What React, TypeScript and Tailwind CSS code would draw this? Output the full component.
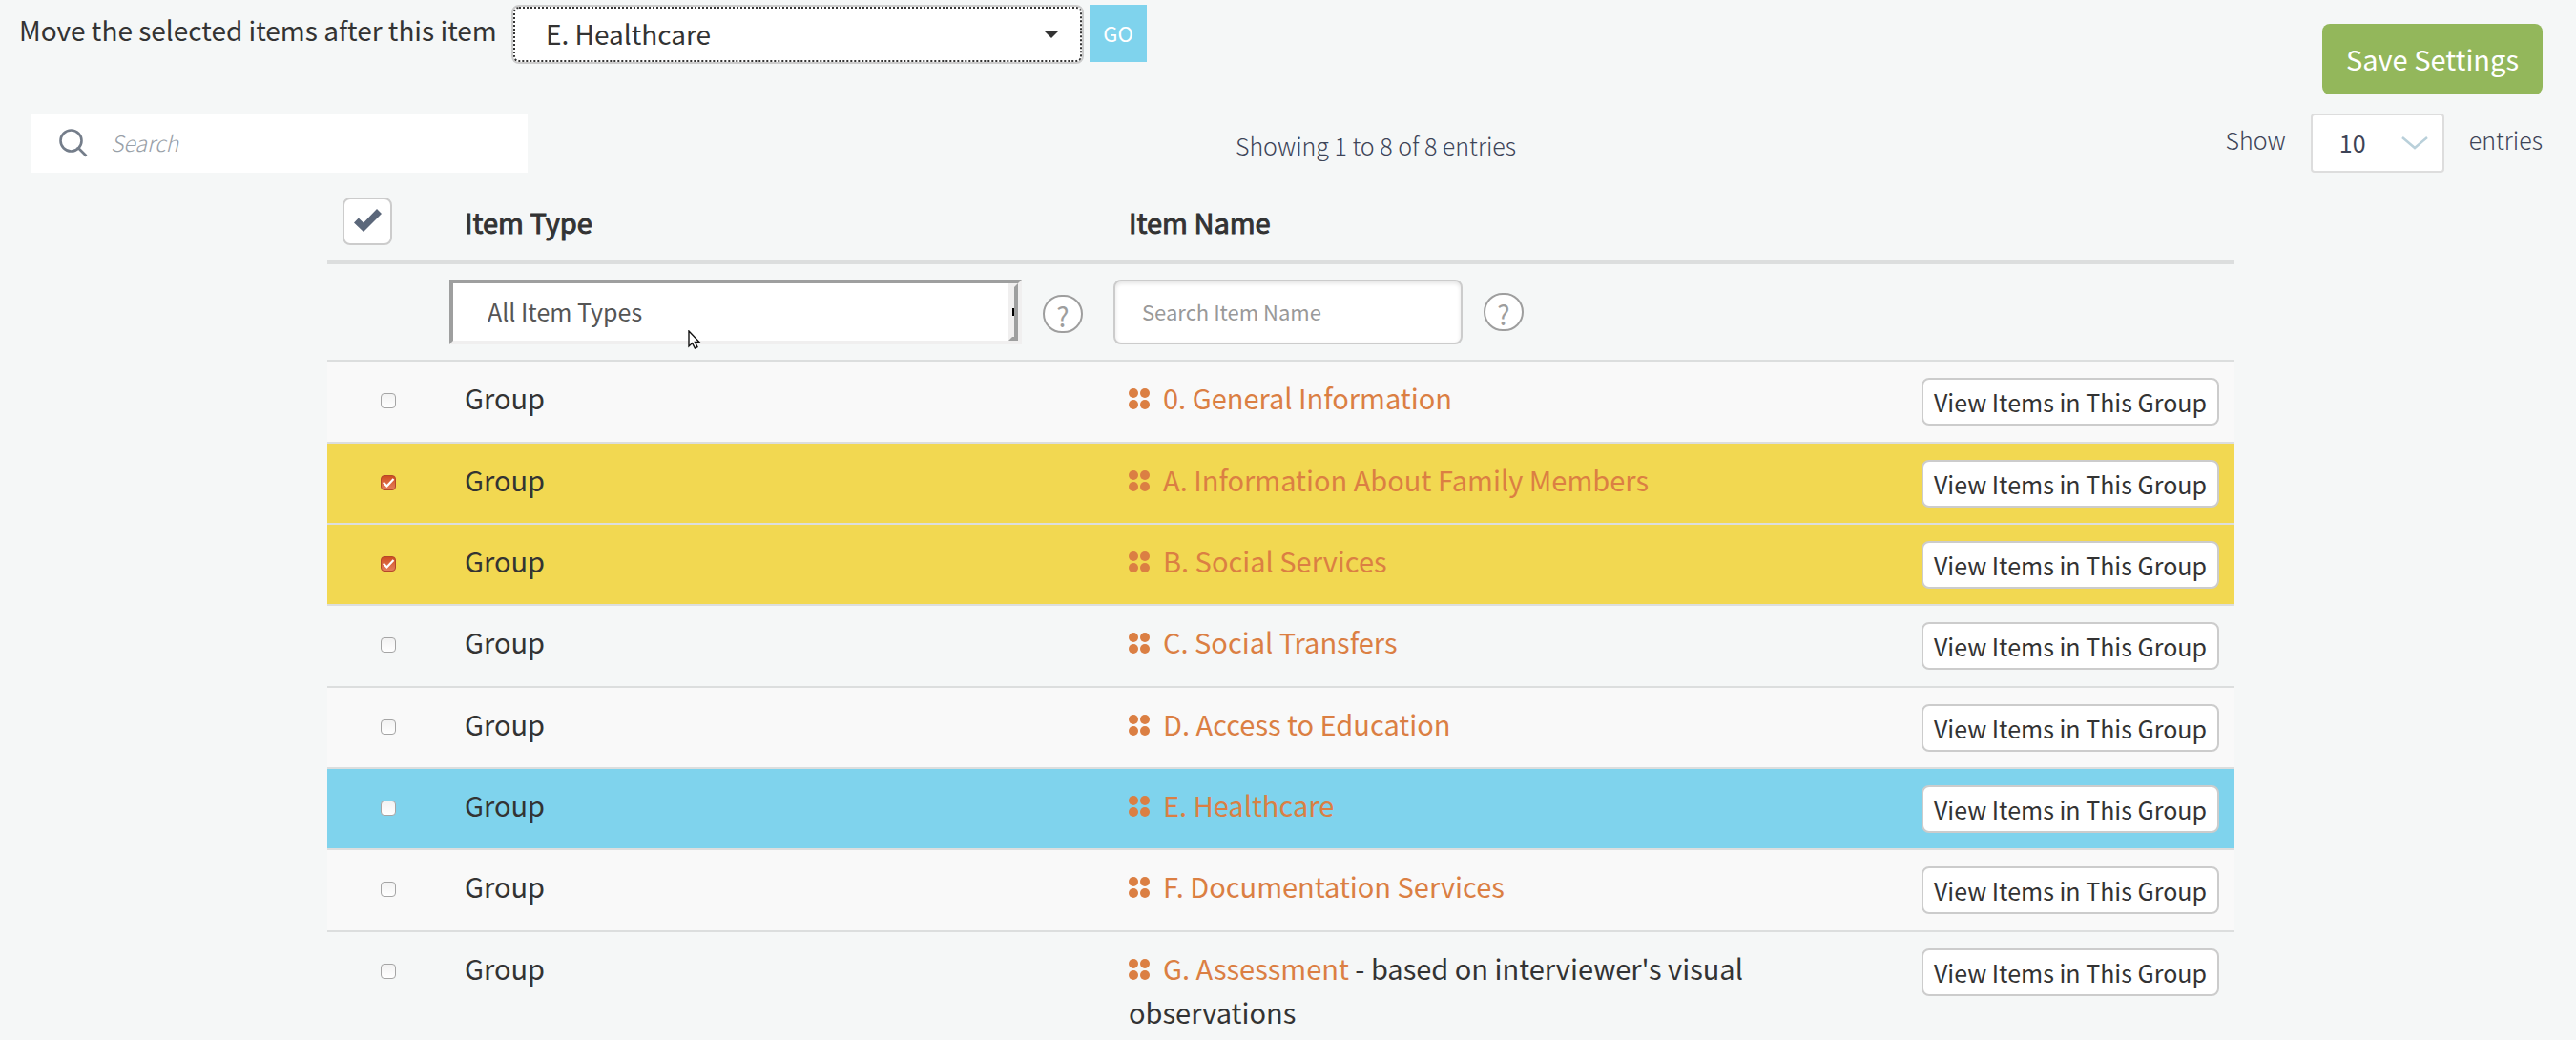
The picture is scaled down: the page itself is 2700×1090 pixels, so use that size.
import { useState } from "react";

const GROUPS = [
  { name: "0. General Information", note: "" },
  { name: "A. Information About Family Members", note: "" },
  { name: "B. Social Services", note: "" },
  { name: "C. Social Transfers", note: "" },
  { name: "D. Access to Education", note: "" },
  { name: "E. Healthcare", note: "" },
  { name: "F. Documentation Services", note: "" },
  { name: "G. Assessment", note: " - based on interviewer's visual observations" },
];

function SearchIcon() {
  return (
    <svg viewBox="0 0 30 30" className="size-[30px] shrink-0" fill="none" stroke="#747d8a" strokeWidth="2.6" aria-hidden="true">
      <circle cx="12.5" cy="12.5" r="11" />
      <path d="M18.500 20.500h3.500M20.500 20.500l8 8" />
    </svg>
  );
}

function GroupIcon() {
  return (
    <svg viewBox="0 0 22 22" className="mr-[14px] inline-block size-[22px] align-baseline" fill="#db7f43" aria-hidden="true">
      <circle cx="5" cy="5" r="5" />
      <circle cx="17" cy="5" r="5" />
      <circle cx="5" cy="17" r="5" />
      <circle cx="17" cy="17" r="5" />
    </svg>
  );
}

function HelpButton({ label }: { label: string }) {
  return (
    <button
      type="button"
      aria-label={label}
      className="flex h-10 w-[42px] shrink-0 items-center justify-center rounded-full border-2 border-[#9e9e9e] bg-white pt-1 text-[28px] leading-8 text-[#9e9e9e]"
    >
      ?
    </button>
  );
}

function Pointer() {
  return (
    <svg viewBox="0 0 14 20" className="pointer-events-none absolute top-[53px] left-[250px] h-[20px] w-[14px]" aria-hidden="true">
      <path d="M1 1v16l3.600-3.400 2.800 5.400 2.600-1.300-2.600-5.200H12z" fill="#fff" stroke="#111" strokeWidth="1.400" />
    </svg>
  );
}

export default function App() {
  const [target, setTarget] = useState("E. Healthcare");
  const [checked, setChecked] = useState<string[]>([GROUPS[1].name, GROUPS[2].name]);
  const toggle = (name: string) =>
    setChecked((c) => (c.includes(name) ? c.filter((n) => n !== name) : [...c, name]));

  return (
    <main className="min-h-screen bg-[#f5f7f7] font-['Noto_Sans_CJK_SC',sans-serif] text-[29px] leading-[46px] text-[#333]">
      <header className="flex items-start pr-[35px] pl-[20px]">
        <label htmlFor="target" className="min-w-[508px] pt-2 text-[28px]">Move the selected items after this item</label>
        <div className="relative mt-[5px] ml-2">
          <select
            id="target"
            value={target}
            onChange={(e) => setTarget(e.target.value)}
            className="h-[62px] w-[600px] appearance-none rounded-lg border-2 border-[#ccc] bg-white pb-[2px] pl-[34px] text-[28px] outline-2 -outline-offset-4 outline-dotted outline-[#333]"
          >
            {GROUPS.map((g) => <option key={g.name}>{g.name}</option>)}
          </select>
          <svg viewBox="0 0 16 8" className="pointer-events-none absolute top-[27px] right-[26px] h-2 w-4" fill="#333" aria-hidden="true">
            <path d="M0 0h16l-8 8z" />
          </svg>
        </div>
        <button type="button" className="mt-[5px] ml-[6px] h-[60px] w-[60px] bg-[#7fd3ed] pb-[2px] text-[22px] text-white">GO</button>
        <button type="button" className="mt-[25px] ml-auto h-[74px] rounded-lg bg-[#93b75b] px-[25px] pb-[2px] text-white">Save Settings</button>
      </header>

      <section className="mt-5 grid grid-cols-3 items-start pr-[35px] pl-[33px] text-[25px] font-light text-[#3d4457]">
        <label className="flex h-[62px] w-[520px] items-center gap-6 bg-white pl-[29px]">
          <SearchIcon />
          <input type="search" placeholder="Search" aria-label="Search" className="min-w-0 grow pb-[2px] text-[23px] italic outline-none placeholder:text-[#999fa8]" />
        </label>
        <p className="pt-[10px] pl-[186px] text-center">Showing 1 to 8 of 8 entries</p>
        <label className="flex items-start justify-end">
          <span className="pt-1">Show</span>
          <span className="relative mx-[26px]">
            <select className="h-[62px] w-[140px] appearance-none rounded border-2 border-[#ddd] bg-white pb-[2px] pl-7 text-[25px] font-normal">
              <option>10</option>
              <option>25</option>
            </select>
            <svg viewBox="0 0 28 14" className="pointer-events-none absolute top-[24px] right-[17px] h-[14px] w-[28px]" fill="none" stroke="#b9d0da" strokeWidth="2.500" aria-hidden="true">
              <path d="M1 1l13 11L27 1" />
            </svg>
          </span>
          <span className="pt-1">entries</span>
        </label>
      </section>

      <div className="pt-3 pr-[358px] pl-[343px]">
        <table className="w-full table-fixed border-collapse text-left">
          <colgroup>
            <col className="w-[128px]" />
            <col className="w-[696px]" />
            <col />
            <col className="w-[360px]" />
          </colgroup>
          <thead>
            <tr className="h-[82px] border-b-4 border-[#dcdede] align-top">
              <th className="pt-[14px] pl-4">
                <button type="button" aria-label="Select all" className="flex h-[50px] w-[52px] items-center justify-center rounded-lg border-2 border-[#ccc] bg-white">
                  <svg viewBox="0 0 29 24" className="mb-[2px] h-[24px] w-[29px]" fill="#5b677a" aria-hidden="true">
                    <path d="M0 14.500l4.800-5 5.200 5L24 0l5 5L10 24z" />
                  </svg>
                </button>
              </th>
              <th className="pt-4 pl-4 font-normal [-webkit-text-stroke:1px_#333]">Item Type</th>
              <th className="pt-4 pl-4 font-normal [-webkit-text-stroke:1px_#333]">Item Name</th>
              <th aria-label="Actions" />
            </tr>
            <tr className="h-[103px] border-b-2 border-[#dcdede]">
              <td />
              <td>
                <div className="relative flex items-center gap-[22px]">
                  <div className="relative h-[68px] w-[600px]">
                    <select aria-label="Item type" className="size-full appearance-none border-4 border-t-[#9e9f9f] border-r-[#f0efef] border-b-[#f0efef] border-l-[#9e9f9f] bg-white pb-[2px] pl-9 text-[25px] text-[#555]">
                      <option>All Item Types</option>
                      <option>Group</option>
                    </select>
                    <span className="pointer-events-none absolute top-1 right-1 bottom-1 w-[10px] border-4 border-t-[#f0efef] border-r-[#9e9f9f] border-b-[#9e9f9f] border-l-[#f0efef] bg-[#f0efef]" />
                    <span className="pointer-events-none absolute top-[30px] right-2 h-2 w-[2px] bg-black" />
                  </div>
                  <div className="pt-1">
                    <HelpButton label="Item type help" />
                  </div>
                  <Pointer />
                </div>
              </td>
              <td>
                <div className="flex items-center gap-[22px]">
                  <input type="text" placeholder="Search Item Name" aria-label="Search item name" className="h-[68px] w-[366px] rounded-lg border-2 border-[#ccc] bg-white px-7 pb-[2px] text-[22px] shadow-[inset_0_2px_4px_#e4e4e4] placeholder:text-[#999]" />
                  <HelpButton label="Item name help" />
                </div>
              </td>
              <td />
            </tr>
          </thead>
          <tbody>
            {GROUPS.map((g) => {
              const on = checked.includes(g.name);
              const bg = on ? "bg-[#f2d851]" : g.name === target ? "bg-[#7fd3ed]" : "odd:bg-[#f9f9f9]";
              return (
                <tr key={g.name} className={`h-[85px] border-b-2 border-[#dcdede] align-top last:border-b-0 nth-[3n+1]:h-[86px] ${bg}`}>
                  <td className="pt-[33px] pl-[56px]">
                    <div className="relative size-4">
                      <input
                        type="checkbox"
                        checked={on}
                        onChange={() => toggle(g.name)}
                        aria-label={g.name}
                        className="block size-4 appearance-none rounded border border-[#a5a5a5] bg-linear-to-b from-[#f2f2f2] to-white checked:border-[#b5482a] checked:from-[#cf4e1f] checked:to-[#e5805a]"
                      />
                      {on && (
                        <svg viewBox="0 0 16 16" className="pointer-events-none absolute inset-0 size-4" fill="none" stroke="#fff" strokeWidth="2.200" aria-hidden="true">
                          <path d="M2.800 7.500l3.700 4L13.500 4" />
                        </svg>
                      )}
                    </div>
                  </td>
                  <td className="pt-[14px] pl-4">Group</td>
                  <td className="pt-[14px] pl-4">
                    <GroupIcon />
                    <a href="#group" className="text-[#db7f43]">{g.name}</a>
                    {g.note}
                  </td>
                  <td className="pt-[17px] pr-4 text-right">
                    <button type="button" className="ml-auto block h-[50px] rounded-lg border-2 border-[#ccc] bg-white px-[11px] text-[25px] leading-[42px]">
                      View Items in This Group
                    </button>
                  </td>
                </tr>
              );
            })}
          </tbody>
        </table>
      </div>
    </main>
  );
}
